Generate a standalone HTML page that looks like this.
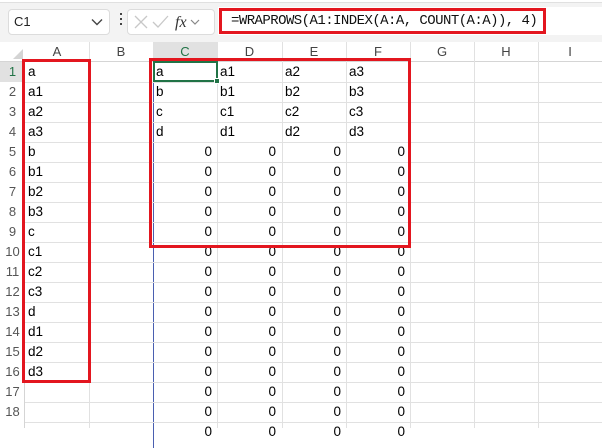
<!DOCTYPE html>
<html><head><style>
body{margin:0;width:602px;height:428px;overflow:hidden;background:#fff;font-family:"Liberation Sans",sans-serif;position:relative}
.a{position:absolute;box-sizing:border-box}
.hl{position:absolute;left:25px;width:577px;height:1px;background:#e1e1e1}
.vl{position:absolute;top:42px;height:386px;width:1px;background:#e1e1e1}
.ch{position:absolute;top:42px;height:20px;line-height:20px;text-align:center;font-size:13px;color:#444}
.rh{position:absolute;left:0;width:25px;text-align:center;font-size:13px;color:#555;line-height:20px;height:20px}
.c{position:absolute;font-size:13.5px;color:#000;line-height:20px;height:20px}
.n{text-align:right;width:60px}
</style></head><body>
<div class="a" style="left:0;top:0;width:602px;height:3px;background:#fff;border-bottom:1px solid #e0e0e0"></div>
<div class="a" style="left:0;top:3px;width:602px;height:39px;background:#f3f3f3"></div>
<div class="a" style="left:8px;top:9px;width:102px;height:26px;background:#fff;border:1px solid #dcdcdc;border-radius:4px"></div>
<div class="a" style="left:14px;top:13px;font-size:13px;color:#222;line-height:18px">C1</div>
<svg class="a" style="left:91px;top:18px" width="12" height="8"><path d="M1 1.5 L6 6.5 L11 1.5" fill="none" stroke="#444" stroke-width="1.4"/></svg>
<div class="a" style="left:120px;top:13px;width:2px;height:2px;background:#444;box-shadow:0 5px 0 #444,0 10px 0 #444"></div>
<div class="a" style="left:127px;top:9px;width:88px;height:26px;background:#fff;border:1px solid #dcdcdc;border-radius:4px"></div>
<svg class="a" style="left:133px;top:13px" width="80" height="18"><path d="M2 3 L14 15 M14 3 L2 15" stroke="#c8c8c8" stroke-width="1.3" fill="none"/><path d="M20 9 L25 14 L35 3" stroke="#c8c8c8" stroke-width="1.3" fill="none"/><text x="42" y="14" font-family="Liberation Serif,serif" font-style="italic" font-size="16" fill="#333">fx</text><path d="M58 7 L62 11 L66 7" stroke="#888" stroke-width="1.2" fill="none"/></svg>
<div class="a" style="left:218px;top:7px;width:384px;height:28px;background:#fff"></div>
<div class="a" style="left:219px;top:8px;width:327px;height:26px;border:3px solid #e3161f"></div>
<div class="a" style="left:231px;top:12px;font-family:'Liberation Mono',monospace;font-size:14px;color:#111;line-height:18px;letter-spacing:-0.55px;white-space:nowrap">=WRAPROWS(A1:INDEX(A:A, COUNT(A:A)), 4)</div>
<div class="a" style="left:0;top:42px;width:602px;height:20px;background:#fff;border-bottom:1px solid #d5d5d5"></div>
<div class="a" style="left:0;top:62px;width:25px;height:366px;background:#fff;border-right:1px solid #d5d5d5"></div>
<svg class="a" style="left:12px;top:48px" width="12" height="12"><path d="M11 1 L11 11 L1 11 Z" fill="#d4d4d4"/></svg>
<div class="a" style="left:153px;top:42px;width:64px;height:20px;background:#e1e1e1;border-bottom:2px solid #217346"></div>
<div class="ch" style="left:25px;width:64px">A</div><div class="ch" style="left:89px;width:64px">B</div><div class="ch" style="left:153px;width:64px;color:#217346">C</div><div class="ch" style="left:217px;width:65px">D</div><div class="ch" style="left:282px;width:64px">E</div><div class="ch" style="left:346px;width:64px">F</div><div class="ch" style="left:410px;width:64px">G</div><div class="ch" style="left:474px;width:64px">H</div><div class="ch" style="left:538px;width:64px">I</div>
<div class="vl" style="left:89px"></div><div class="vl" style="left:153px;background:#4a5fb0;top:62px"></div><div class="vl" style="left:217px"></div><div class="vl" style="left:282px"></div><div class="vl" style="left:346px"></div><div class="vl" style="left:410px"></div><div class="vl" style="left:474px"></div><div class="vl" style="left:538px"></div>
<div class="hl" style="top:82px"></div><div class="hl" style="top:102px"></div><div class="hl" style="top:122px"></div><div class="hl" style="top:142px"></div><div class="hl" style="top:162px"></div><div class="hl" style="top:182px"></div><div class="hl" style="top:202px"></div><div class="hl" style="top:222px"></div><div class="hl" style="top:242px"></div><div class="hl" style="top:262px"></div><div class="hl" style="top:282px"></div><div class="hl" style="top:302px"></div><div class="hl" style="top:322px"></div><div class="hl" style="top:342px"></div><div class="hl" style="top:362px"></div><div class="hl" style="top:382px"></div><div class="hl" style="top:402px"></div><div class="hl" style="top:422px"></div>
<div class="rh" style="top:62px;color:#217346;background:#e1e1e1">1</div><div class="rh" style="top:82px">2</div><div class="rh" style="top:102px">3</div><div class="rh" style="top:122px">4</div><div class="rh" style="top:142px">5</div><div class="rh" style="top:162px">6</div><div class="rh" style="top:182px">7</div><div class="rh" style="top:202px">8</div><div class="rh" style="top:222px">9</div><div class="rh" style="top:242px">10</div><div class="rh" style="top:262px">11</div><div class="rh" style="top:282px">12</div><div class="rh" style="top:302px">13</div><div class="rh" style="top:322px">14</div><div class="rh" style="top:342px">15</div><div class="rh" style="top:362px">16</div><div class="rh" style="top:382px">17</div><div class="rh" style="top:402px">18</div>
<div class="c" style="left:28px;top:62px">a</div><div class="c" style="left:28px;top:82px">a1</div><div class="c" style="left:28px;top:102px">a2</div><div class="c" style="left:28px;top:122px">a3</div><div class="c" style="left:28px;top:142px">b</div><div class="c" style="left:28px;top:162px">b1</div><div class="c" style="left:28px;top:182px">b2</div><div class="c" style="left:28px;top:202px">b3</div><div class="c" style="left:28px;top:222px">c</div><div class="c" style="left:28px;top:242px">c1</div><div class="c" style="left:28px;top:262px">c2</div><div class="c" style="left:28px;top:282px">c3</div><div class="c" style="left:28px;top:302px">d</div><div class="c" style="left:28px;top:322px">d1</div><div class="c" style="left:28px;top:342px">d2</div><div class="c" style="left:28px;top:362px">d3</div>
<div class="c" style="left:156px;top:62px">a</div><div class="c" style="left:220px;top:62px">a1</div><div class="c" style="left:285px;top:62px">a2</div><div class="c" style="left:349px;top:62px">a3</div>
<div class="c" style="left:156px;top:82px">b</div><div class="c" style="left:220px;top:82px">b1</div><div class="c" style="left:285px;top:82px">b2</div><div class="c" style="left:349px;top:82px">b3</div>
<div class="c" style="left:156px;top:102px">c</div><div class="c" style="left:220px;top:102px">c1</div><div class="c" style="left:285px;top:102px">c2</div><div class="c" style="left:349px;top:102px">c3</div>
<div class="c" style="left:156px;top:122px">d</div><div class="c" style="left:220px;top:122px">d1</div><div class="c" style="left:285px;top:122px">d2</div><div class="c" style="left:349px;top:122px">d3</div>
<div id="z"></div>
<script>
var h='';for(var r=4;r<19;r++){var t=62+r*20;[153,217,282,346].forEach(function(x){h+='<div class="c n" style="left:'+(x-1)+'px;top:'+t+'px">0</div>';});}
document.getElementById('z').innerHTML=h;
</script>
<div class="a" style="left:153px;top:61px;width:65px;height:21px;border:2px solid #217346"></div>
<div class="a" style="left:214px;top:78px;width:6px;height:6px;background:#217346;border:1px solid #fff"></div>
<div class="a" style="left:22px;top:59px;width:69px;height:324px;border:3px solid #e3161f"></div>
<div class="a" style="left:149px;top:58px;width:262px;height:190px;border:3px solid #e3161f"></div>
</body></html>
